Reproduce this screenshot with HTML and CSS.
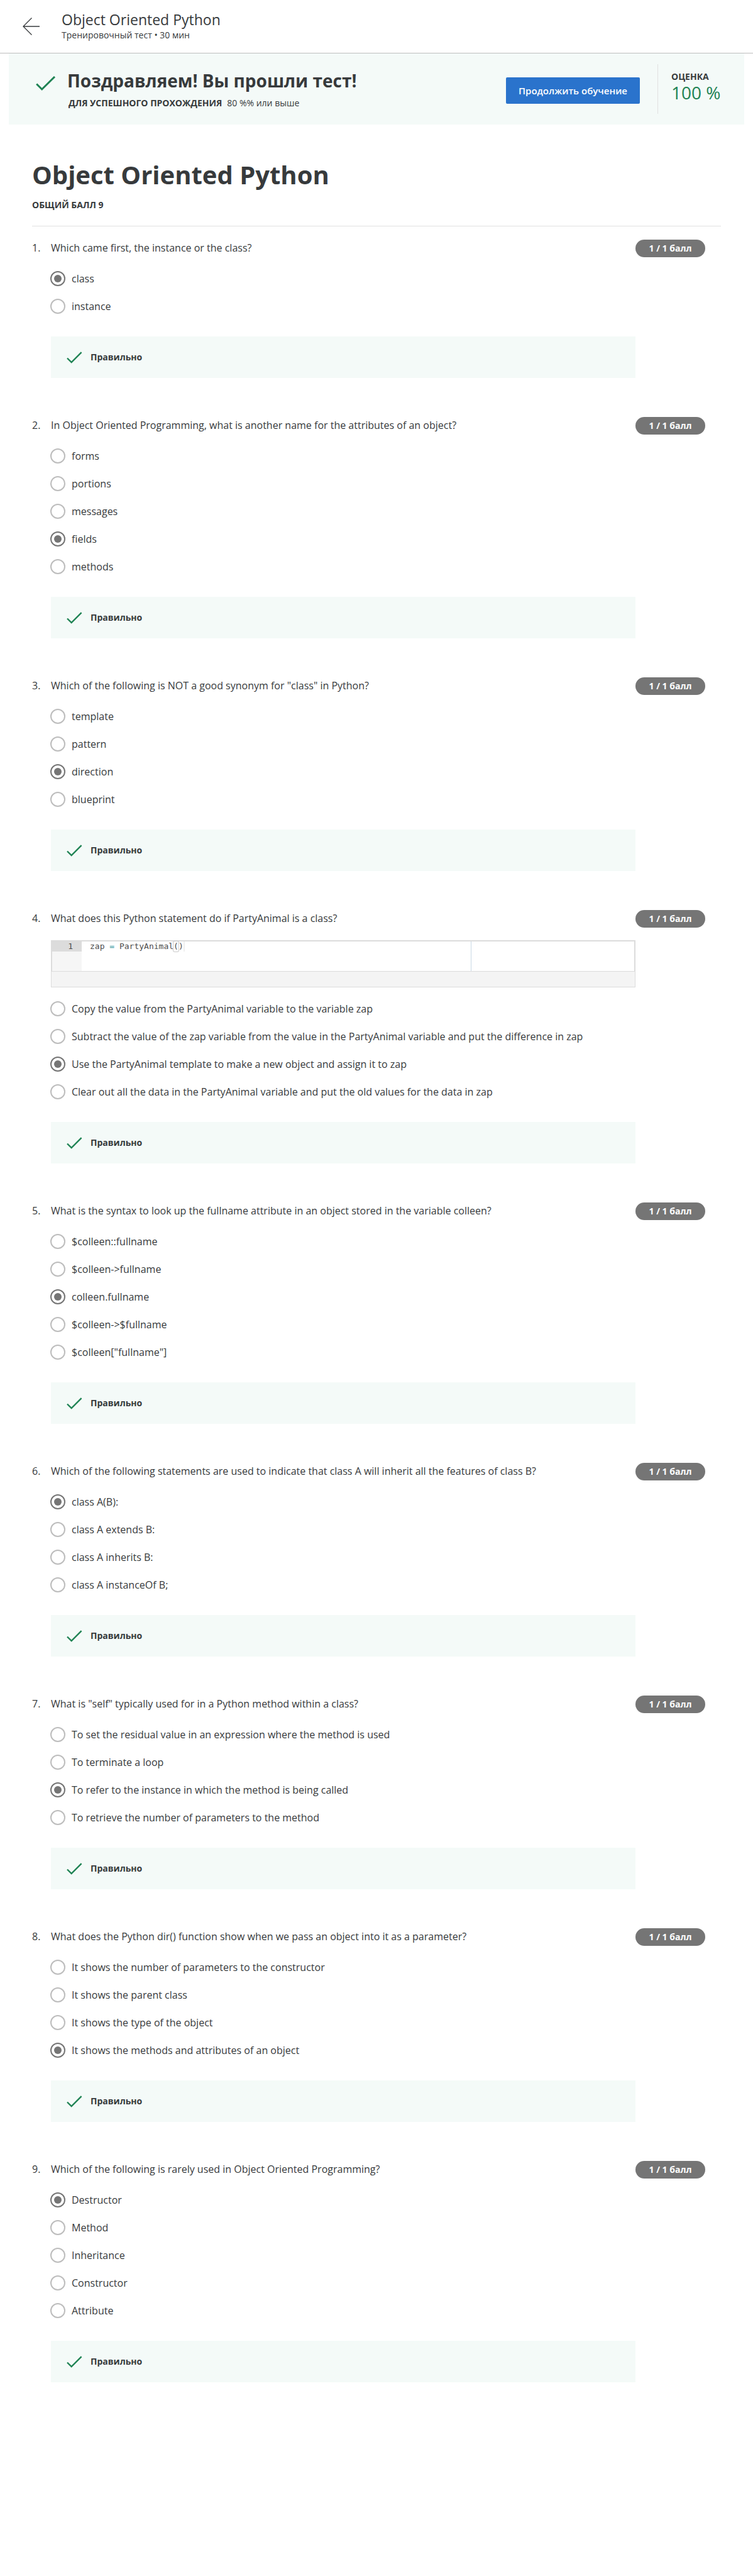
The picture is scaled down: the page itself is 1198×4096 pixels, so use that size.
FILE: index.html
```html
<!DOCTYPE html>
<html lang="ru">
<head>
<meta charset="utf-8">
<meta name="viewport" content="width=device-width, initial-scale=1">
<title>Object Oriented Python</title>
<link rel="stylesheet" href="styles.css">
</head>
<body>
<svg class="sprite" aria-hidden="true">
  <symbol id="check" viewBox="0 0 25 19"><path d="M1 10.5 7.7 17 23.6 1.2" fill="none" stroke="currentColor" stroke-width="2.4"/></symbol>
</svg>

<header class="topbar">
  <a class="back" href="#" aria-label="Назад">
    <svg width="28" height="28" viewBox="0 0 28 28" aria-hidden="true"><path d="M27 14H1M14.500 .5 1 14l13.500 13.500" fill="none" stroke="currentColor" stroke-width="1.300"/></svg>
  </a>
  <div class="topbar-text">
    <div class="topbar-title">Object Oriented Python</div>
    <div class="topbar-meta">Тренировочный тест • 30 мин</div>
  </div>
</header>

<section class="banner">
  <svg class="banner-check" viewBox="0 0 32 24" aria-hidden="true"><path d="M1.200 12.500 9.700 21 30 1" fill="none" stroke="currentColor" stroke-width="3"/></svg>
  <div class="banner-copy">
    <h2 class="banner-title">Поздравляем! Вы прошли тест!</h2>
    <p class="banner-note"><strong>ДЛЯ УСПЕШНОГО ПРОХОЖДЕНИЯ</strong><span>80 %% или выше</span></p>
  </div>
  <button class="continue" type="button">Продолжить обучение</button>
  <div class="grade">
    <div class="grade-label">ОЦЕНКА</div>
    <div class="grade-value">100 %</div>
  </div>
</section>

<main class="quiz">
  <div class="quiz-head">
    <h1 class="quiz-title">Object Oriented Python</h1>
    <p class="quiz-total">ОБЩИЙ БАЛЛ 9</p>
  </div>

  <section class="question">
    <div class="number">1.</div>
    <div class="body">
      <h3 class="prompt" id="q1">Which came first, the instance or the class?</h3>
      <div class="options" role="radiogroup" aria-labelledby="q1">
        <label class="option"><input type="radio" name="q1" checked>class</label>
        <label class="option"><input type="radio" name="q1">instance</label>
      </div>
      <div class="feedback"><svg><use href="#check"/></svg>Правильно</div>
    </div>
    <div class="points">1 / 1 балл</div>
  </section>

  <section class="question">
    <div class="number">2.</div>
    <div class="body">
      <h3 class="prompt" id="q2">In Object Oriented Programming, what is another name for the attributes of an object?</h3>
      <div class="options" role="radiogroup" aria-labelledby="q2">
        <label class="option"><input type="radio" name="q2">forms</label>
        <label class="option"><input type="radio" name="q2">portions</label>
        <label class="option"><input type="radio" name="q2">messages</label>
        <label class="option"><input type="radio" name="q2" checked>fields</label>
        <label class="option"><input type="radio" name="q2">methods</label>
      </div>
      <div class="feedback"><svg><use href="#check"/></svg>Правильно</div>
    </div>
    <div class="points">1 / 1 балл</div>
  </section>

  <section class="question">
    <div class="number">3.</div>
    <div class="body">
      <h3 class="prompt" id="q3">Which of the following is NOT a good synonym for "class" in Python?</h3>
      <div class="options" role="radiogroup" aria-labelledby="q3">
        <label class="option"><input type="radio" name="q3">template</label>
        <label class="option"><input type="radio" name="q3">pattern</label>
        <label class="option"><input type="radio" name="q3" checked>direction</label>
        <label class="option"><input type="radio" name="q3">blueprint</label>
      </div>
      <div class="feedback"><svg><use href="#check"/></svg>Правильно</div>
    </div>
    <div class="points">1 / 1 балл</div>
  </section>

  <section class="question">
    <div class="number">4.</div>
    <div class="body">
      <h3 class="prompt" id="q4">What does this Python statement do if PartyAnimal is a class?</h3>
      <div class="code">
        <div class="editor">
          <div class="gutter"><div class="line-number">1</div></div>
          <div class="lines"><pre class="line">zap <span class="operator">=</span> PartyAnimal<span class="bracket">(</span>)<span class="cursor"></span></pre></div>
        </div>
        <div class="code-footer"></div>
      </div>
      <div class="options" role="radiogroup" aria-labelledby="q4">
        <label class="option"><input type="radio" name="q4">Copy the value from the PartyAnimal variable to the variable zap</label>
        <label class="option"><input type="radio" name="q4">Subtract the value of the zap variable from the value in the PartyAnimal variable and put the difference in zap</label>
        <label class="option"><input type="radio" name="q4" checked>Use the PartyAnimal template to make a new object and assign it to zap</label>
        <label class="option"><input type="radio" name="q4">Clear out all the data in the PartyAnimal variable and put the old values for the data in zap</label>
      </div>
      <div class="feedback"><svg><use href="#check"/></svg>Правильно</div>
    </div>
    <div class="points">1 / 1 балл</div>
  </section>

  <section class="question">
    <div class="number">5.</div>
    <div class="body">
      <h3 class="prompt" id="q5">What is the syntax to look up the fullname attribute in an object stored in the variable colleen?</h3>
      <div class="options" role="radiogroup" aria-labelledby="q5">
        <label class="option"><input type="radio" name="q5">$colleen::fullname</label>
        <label class="option"><input type="radio" name="q5">$colleen-&gt;fullname</label>
        <label class="option"><input type="radio" name="q5" checked>colleen.fullname</label>
        <label class="option"><input type="radio" name="q5">$colleen-&gt;$fullname</label>
        <label class="option"><input type="radio" name="q5">$colleen["fullname"]</label>
      </div>
      <div class="feedback"><svg><use href="#check"/></svg>Правильно</div>
    </div>
    <div class="points">1 / 1 балл</div>
  </section>

  <section class="question">
    <div class="number">6.</div>
    <div class="body">
      <h3 class="prompt" id="q6">Which of the following statements are used to indicate that class A will inherit all the features of class B?</h3>
      <div class="options" role="radiogroup" aria-labelledby="q6">
        <label class="option"><input type="radio" name="q6" checked>class A(B):</label>
        <label class="option"><input type="radio" name="q6">class A extends B:</label>
        <label class="option"><input type="radio" name="q6">class A inherits B:</label>
        <label class="option"><input type="radio" name="q6">class A instanceOf B;</label>
      </div>
      <div class="feedback"><svg><use href="#check"/></svg>Правильно</div>
    </div>
    <div class="points">1 / 1 балл</div>
  </section>

  <section class="question">
    <div class="number">7.</div>
    <div class="body">
      <h3 class="prompt" id="q7">What is "self" typically used for in a Python method within a class?</h3>
      <div class="options" role="radiogroup" aria-labelledby="q7">
        <label class="option"><input type="radio" name="q7">To set the residual value in an expression where the method is used</label>
        <label class="option"><input type="radio" name="q7">To terminate a loop</label>
        <label class="option"><input type="radio" name="q7" checked>To refer to the instance in which the method is being called</label>
        <label class="option"><input type="radio" name="q7">To retrieve the number of parameters to the method</label>
      </div>
      <div class="feedback"><svg><use href="#check"/></svg>Правильно</div>
    </div>
    <div class="points">1 / 1 балл</div>
  </section>

  <section class="question">
    <div class="number">8.</div>
    <div class="body">
      <h3 class="prompt" id="q8">What does the Python dir() function show when we pass an object into it as a parameter?</h3>
      <div class="options" role="radiogroup" aria-labelledby="q8">
        <label class="option"><input type="radio" name="q8">It shows the number of parameters to the constructor</label>
        <label class="option"><input type="radio" name="q8">It shows the parent class</label>
        <label class="option"><input type="radio" name="q8">It shows the type of the object</label>
        <label class="option"><input type="radio" name="q8" checked>It shows the methods and attributes of an object</label>
      </div>
      <div class="feedback"><svg><use href="#check"/></svg>Правильно</div>
    </div>
    <div class="points">1 / 1 балл</div>
  </section>

  <section class="question">
    <div class="number">9.</div>
    <div class="body">
      <h3 class="prompt" id="q9">Which of the following is rarely used in Object Oriented Programming?</h3>
      <div class="options" role="radiogroup" aria-labelledby="q9">
        <label class="option"><input type="radio" name="q9" checked>Destructor</label>
        <label class="option"><input type="radio" name="q9">Method</label>
        <label class="option"><input type="radio" name="q9">Inheritance</label>
        <label class="option"><input type="radio" name="q9">Constructor</label>
        <label class="option"><input type="radio" name="q9">Attribute</label>
      </div>
      <div class="feedback"><svg><use href="#check"/></svg>Правильно</div>
    </div>
    <div class="points">1 / 1 балл</div>
  </section>
</main>
</body>
</html>
```
FILE: styles.css
```css
* {
  box-sizing: border-box;
}

body {
  margin: 0;
  background: #fff;
  color: #373a3c;
  font-family: "Open Sans", "Noto Sans", sans-serif;
  font-size: 16px;
  line-height: 26px;
}

h1, h2, h3, p, pre {
  margin: 0;
}

.sprite {
  display: none;
}

/* Top bar */
.topbar {
  display: flex;
  gap: 34px;
  padding: 16px 36px 18px;
  border-bottom: 1px solid #bdbdbd;
}

.back {
  display: flex;
  padding-top: 12px;
  color: inherit;
}

.topbar-title {
  font-size: 23px;
  line-height: 30px;
}

.topbar-meta {
  font-size: 14px;
  line-height: 20px;
}

/* Result banner */
.banner {
  display: flex;
  align-items: flex-start;
  margin: 0 14px;
  padding: 17px 0 17px 43px;
  background: #f4faf8;
}

.banner-check {
  flex: none;
  width: 32px;
  height: 24px;
  margin-top: 19px;
  color: #1f8354;
}

.banner-copy {
  flex: 1;
  padding: 6px 0 0 18px;
}

.banner-title {
  font-size: 28px;
  line-height: 40px;
  font-weight: 700;
}

.banner-note {
  display: flex;
  gap: 8px;
  padding: 6px 0 0 2px;
  font-size: 14px;
  line-height: 20px;
}

.continue {
  width: 213px;
  height: 42px;
  margin: 21px 28px 0 0;
  padding: 0;
  border: 0;
  border-radius: 2px;
  background: #2a73cc;
  color: #fff;
  font: 600 15px/20px "Open Sans", "Noto Sans", sans-serif;
}

.grade {
  width: 138px;
  min-height: 79px;
  padding: 10px 0 0 21px;
  border-left: 1px solid #e1e1e1;
}

.grade-label {
  font-size: 14px;
  line-height: 20px;
  font-weight: 700;
}

.grade-value {
  color: #1f8354;
  font-size: 28px;
  line-height: 30px;
}

/* Quiz */
.quiz {
  padding: 54px 51px 309px;
}

.quiz-head {
  margin-bottom: 21px;
  padding-bottom: 23px;
  border-bottom: 1px solid #e1e1e1;
}

.quiz-title {
  font-size: 40px;
  line-height: 52px;
  font-weight: 700;
}

.quiz-total {
  margin-top: 12px;
  font-size: 14px;
  line-height: 20px;
  font-weight: 700;
}

.question {
  display: grid;
  grid-template-columns: 30px 1fr 111px;
  align-items: start;
  margin-bottom: 62px;
  padding-right: 25px;
}

.question:last-child {
  margin-bottom: 0;
}

.prompt {
  margin-bottom: 14px;
  font-size: 16px;
  line-height: 26px;
  font-weight: 400;
}

.points {
  border-radius: 14px;
  background: #757575;
  color: #fff;
  font-size: 14px;
  line-height: 28px;
  font-weight: 700;
  text-align: center;
}

.options {
  margin: 0 0 26px -1px;
}

.option {
  display: flex;
  align-items: center;
  gap: 10px;
  min-height: 44px;
}

.option input {
  display: grid;
  flex: none;
  place-content: center;
  width: 24px;
  height: 24px;
  margin: 0;
  border: 2px solid #bdbdbd;
  border-radius: 50%;
  appearance: none;
}

.option input:checked {
  border-color: #757575;
}

.option input:checked::before {
  width: 12px;
  height: 12px;
  border-radius: 50%;
  background: #757575;
  content: "";
}

.feedback {
  display: flex;
  align-items: center;
  gap: 13px;
  min-height: 66px;
  padding-left: 25px;
  background: #f4faf8;
  font-size: 14px;
  line-height: 20px;
  font-weight: 700;
}

.feedback svg {
  width: 25px;
  height: 19px;
  color: #1f8354;
}

/* Code sample */
.code {
  margin: 22px 0 12px;
  border: 1px solid #dcdcdc;
  color: #4d4d4c;
  font: 13px/16px "DejaVu Sans Mono", "Liberation Mono", monospace;
}

.editor {
  display: flex;
  min-height: 49px;
  border: 1px solid #dcdcdc;
}

.gutter {
  width: 47px;
  background: #f6f6f6;
}

.line-number {
  padding-right: 14px;
  background: #dcdcdc;
  text-align: right;
}

.lines {
  width: 67%;
  padding-left: 13px;
  border-right: 1px solid #c9d9e6;
}

.line {
  display: flex;
  white-space: pre;
  font: inherit;
}

.operator {
  color: #3e999f;
}

.bracket {
  border-radius: 2px;
  box-shadow: 0 0 0 1px #ccc;
}

.cursor {
  width: 2px;
  background: #efefef;
}

.code-footer {
  height: 24px;
  background: #f4f4f4;
}
```
